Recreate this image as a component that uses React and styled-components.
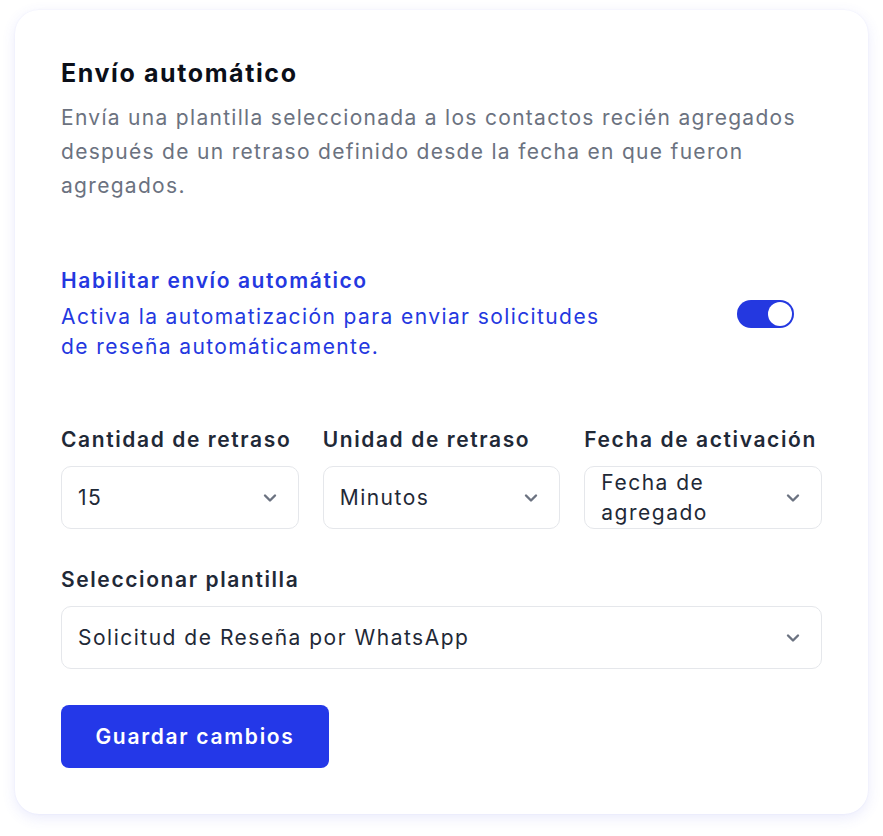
import React, { useState } from 'react'
import styled, { createGlobalStyle } from 'styled-components'

const GlobalStyle = createGlobalStyle`
    body {
        margin: 0;
        background: #ffffff;
        font-family: Inter, "Noto Sans", sans-serif;
    }
`

function Chevron() {
    return (
        <svg width='16' height='16' viewBox='0 0 16 16' fill='none'>
            <path d='M3 5.5 L8 10.5 L13 5.5' stroke='#6b7280' strokeWidth='2.4' strokeLinecap='round' strokeLinejoin='round' />
        </svg>
    )
}

function Select({ value }) {
    return (
        <SelectBox>
            <SelectValue>{value}</SelectValue>
            <ChevronWrap>
                <Chevron />
            </ChevronWrap>
        </SelectBox>
    )
}

function App() {
    const [enabled, setEnabled] = useState(true)

    return (
        <>
            <GlobalStyle />
            <Page>
                <Card>
                    <Title>Envío automático</Title>
                    <Description>
                        Envía una plantilla seleccionada a los contactos recién agregados
                        después de un retraso definido desde la fecha en que fueron agregados.
                    </Description>

                    <ToggleRow>
                        <ToggleText>
                            <ToggleTitle>Habilitar envío automático</ToggleTitle>
                            <ToggleDesc>
                                Activa la automatización para enviar solicitudes de reseña automáticamente.
                            </ToggleDesc>
                        </ToggleText>
                        <Switch on={enabled} onClick={() => setEnabled(!enabled)}>
                            <Knob />
                        </Switch>
                    </ToggleRow>

                    <FieldGrid>
                        <Field>
                            <Label>Cantidad de retraso</Label>
                            <Select value='15' />
                        </Field>
                        <Field>
                            <Label>Unidad de retraso</Label>
                            <Select value='Minutos' />
                        </Field>
                        <Field>
                            <Label>Fecha de activación</Label>
                            <Select value='Fecha de agregado' />
                        </Field>
                    </FieldGrid>

                    <Field>
                        <Label>Seleccionar plantilla</Label>
                        <Select value='Solicitud de Reseña por WhatsApp' />
                    </Field>

                    <SaveButton>Guardar cambios</SaveButton>
                </Card>
            </Page>
        </>
    )
}

export default App

const Page = styled.div`
    padding: 10px 15px 22px 15px;
`

const Card = styled.div`
    width: 853px;
    box-sizing: border-box;
    padding: 47px 46px 46px 46px;
    background: #ffffff;
    border-radius: 24px;
    box-shadow: 0 4px 14px rgba(79, 90, 230, 0.12), 0 0 2px rgba(79, 90, 230, 0.08);
    display: flex;
    flex-direction: column;
`

const Title = styled.h1`
    margin: 0;
    font-size: 25px;
    line-height: 32px;
    font-weight: 700;
    letter-spacing: 1.6px;
    color: #0b0f19;
`

const Description = styled.p`
    margin: 12px 0 0 0;
    font-size: 21px;
    line-height: 34px;
    letter-spacing: 1.3px;
    color: #6b7280;
`

const ToggleRow = styled.div`
    margin-top: 63px;
    display: flex;
    align-items: center;
    justify-content: space-between;
    padding-right: 28px;
`

const ToggleText = styled.div`
    display: flex;
    flex-direction: column;
    gap: 6px;
    max-width: 550px;
`

const ToggleTitle = styled.div`
    font-size: 21px;
    line-height: 30px;
    font-weight: 600;
    letter-spacing: 1.6px;
    color: #2438e0;
`

const ToggleDesc = styled.div`
    font-size: 21px;
    line-height: 30px;
    letter-spacing: 1.4px;
    color: #2438e0;
`

const Switch = styled.button`
    width: 57px;
    height: 28px;
    border: none;
    padding: 2px;
    border-radius: 14px;
    background: ${props => (props.on ? '#2438e0' : '#d1d5db')};
    display: flex;
    align-items: center;
    justify-content: ${props => (props.on ? 'flex-end' : 'flex-start')};
    cursor: pointer;
`

const Knob = styled.span`
    width: 24px;
    height: 24px;
    border-radius: 50%;
    background: #ffffff;
`

const FieldGrid = styled.div`
    margin-top: 63px;
    display: grid;
    grid-template-columns: repeat(3, 1fr);
    gap: 24px;
    margin-bottom: 36px;
`

const Field = styled.div`
    display: flex;
    flex-direction: column;
    gap: 11px;
`

const Label = styled.div`
    font-size: 21px;
    line-height: 30px;
    font-weight: 600;
    letter-spacing: 1.6px;
    color: #1f2937;
    white-space: nowrap;
`

const SelectBox = styled.div`
    height: 63px;
    box-sizing: border-box;
    border: 1.5px solid #e5e7eb;
    border-radius: 10px;
    padding: 0 20px 0 16px;
    display: flex;
    align-items: center;
    justify-content: space-between;
    gap: 12px;
    background: #ffffff;
`

const SelectValue = styled.span`
    flex: 1;
    font-size: 21px;
    line-height: 30px;
    letter-spacing: 1.5px;
    color: #1f2937;
`

const ChevronWrap = styled.span`
    display: flex;
    align-items: center;
    flex-shrink: 0;
    padding-left: 36px;
`

const SaveButton = styled.button`
    margin-top: 36px;
    align-self: flex-start;
    width: 268px;
    height: 63px;
    border: none;
    border-radius: 8px;
    background: #2438e8;
    color: #ffffff;
    font-family: Inter, "Noto Sans", sans-serif;
    font-size: 21px;
    font-weight: 600;
    letter-spacing: 1.7px;
    cursor: pointer;
`
